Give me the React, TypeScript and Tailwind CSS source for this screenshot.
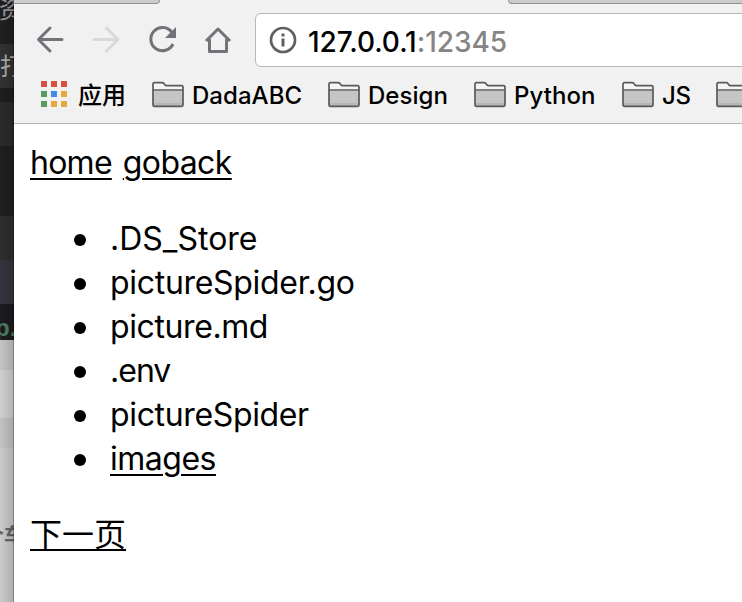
import React from "react";

const uiFont = "font-['Inter','Noto_Sans_CJK_SC',sans-serif]";
const pageFont = "font-['Inter','Noto_Sans_CJK_SC',sans-serif]";

function Backdrop() {
  return (
    <aside className="relative flex w-[14px] shrink-0 flex-col overflow-hidden font-['Noto_Sans_CJK_SC',sans-serif]">
      <div className="h-[44px] shrink-0 bg-[#202022]">
        <span className="-ml-[1px] block -translate-y-[9px] whitespace-nowrap text-[24px] leading-[34px] text-[#999]">资</span>
      </div>
      <div className="h-[44px] shrink-0 bg-[#323232]">
        <span className="block whitespace-nowrap text-[24px] leading-[41px] text-[#aaa]">打</span>
      </div>
      <div className="h-[14px] shrink-0 bg-[#1e1e20]" />
      <div className="h-[44px] shrink-0 bg-[#2b2b2b]" />
      <div className="h-[70px] shrink-0 bg-[#1f1f21]" />
      <div className="h-[44px] shrink-0 bg-[#2e2e2e]" />
      <div className="h-[44px] shrink-0 bg-[#35343c]" />
      <div className="h-[36px] shrink-0 bg-[#1c1c20]">
        <span className="-ml-[5px] block whitespace-nowrap font-['Liberation_Sans',sans-serif] text-[24px] font-bold leading-[48px] text-[#4b8062]">p.</span>
      </div>
      <div className="h-[30px] shrink-0 bg-[#c5c5c5]" />
      <div className="h-[48px] shrink-0 bg-[#d0d0d0]" />
      <div className="h-[30px] shrink-0 bg-[#c3c3c3]" />
      <div className="h-[154px] shrink-0 bg-[#cbcbcb] pt-[72px]">
        <span className="-ml-[16px] flex text-[20px] font-bold leading-[30px] text-[#666]">
          <span className="shrink-0">个</span>
          <span className="shrink-0">车</span>
        </span>
      </div>
      <div className="absolute inset-y-0 right-0 w-[14px] bg-gradient-to-r from-black/0 to-black/15" />
      <div className="absolute inset-y-0 right-0 w-px bg-black/25" />
    </aside>
  );
}

function Folder() {
  return (
    <svg className="shrink-0" width="34" height="28" viewBox="0 0 34 28" fill="none">
      <path d="M2 10h30v14a1.3 1.3 0 0 1-1.3 1.3H3.3A1.3 1.3 0 0 1 2 24z" fill="#c5c5c5" />
      <path d="M2 22h30v3H2z" fill="#b6b6b6" />
      <path d="M2 9V3a1.3 1.3 0 0 1 1.3-1.3h8.4L15 4.6h15.7A1.3 1.3 0 0 1 32 6v3" fill="#f5f5f5" />
      <path d="M2 3a1.3 1.3 0 0 1 1.3-1.3h8.2c.5 0 .8.2 1.1.5l1.4 1.7c.4.5.8.7 1.3.7h15.4A1.3 1.3 0 0 1 32 6v18a1.3 1.3 0 0 1-1.3 1.3H3.3A1.3 1.3 0 0 1 2 24zM2 9h30" stroke="#5a5a5a" strokeWidth="1.7" />
    </svg>
  );
}

function AppsIcon() {
  const colors = ["#d55042", "#d55042", "#d55042", "#579b60", "#4689e8", "#e3a83e", "#579b60", "#e3a83e", "#e3a83e"];
  return (
    <svg className="mb-[2px] shrink-0" width="26" height="26" viewBox="0 0 26 26">
      {colors.map((c, i) => (
        <rect key={i} x={(i % 3) * 10} y={Math.floor(i / 3) * 10} width="6" height="6" fill={c} />
      ))}
    </svg>
  );
}

function NavIcons() {
  return (
    <svg className="shrink-0" width="241" height="54" viewBox="14 13 241 54" fill="none" stroke="#717378" strokeWidth="3">
      <path d="M62 39.5H39M50 28 38.5 39.5 50 51" strokeLinecap="round" strokeLinejoin="round" />
      <path d="M94 39.5h23M106.500 28 118 39.500 106.500 51" stroke="#d9d9d9" strokeLinecap="round" strokeLinejoin="round" />
      <path d="M171.800 32.200A11.600 11.600 0 1 0 173 44" />
      <path d="M176 27v11h-11z" fill="#717378" stroke="none" />
      <path d="M206 41 218 29l12 12M209.500 39v12.500h17V39" strokeLinejoin="round" />
    </svg>
  );
}

function Bookmark({ label, className }: { label: string; className: string }) {
  return (
    <div className={`flex shrink-0 items-center gap-[7px] ${className}`}>
      <Folder />
      <span className="mt-[2px] whitespace-nowrap">{label}</span>
    </div>
  );
}

function Chrome() {
  return (
    <header className={`flex h-[124px] shrink-0 flex-col border-b border-[#b5b5b5] bg-[#f1f1f1] ${uiFont}`}>
      <div className="flex h-[4px] shrink-0 justify-between">
        <div className="w-[146px] rounded-br-[4px] border-b border-r border-[#929292] bg-[#cbcace]" />
        <div className="w-[234px] rounded-bl-[4px] border-b border-l border-[#929292] bg-[#cbcace]" />
      </div>
      <div className="mt-[9px] flex h-[54px] shrink-0">
        <NavIcons />
        <div className="-mr-[10px] flex flex-1 items-center rounded-[6px] border border-[#b8b8b8] bg-white pl-[13px]">
          <svg className="shrink-0" width="28" height="28" viewBox="0 0 28 28" fill="none">
            <circle cx="14" cy="14" r="12" stroke="#5f6065" strokeWidth="2.700" />
            <path d="M12.500 7.500h3v3h-3zM12.500 12.500h3v8h-3z" fill="#5f6065" />
          </svg>
          <span className="ml-[11px] mt-[3px] whitespace-nowrap text-[28px] font-[450] leading-[40px] tracking-[-0.050px] text-black">
            127.0.0.1<span className="text-[#858585]">:12345</span>
          </span>
        </div>
      </div>
      <div className="flex h-[56px] items-center overflow-hidden pl-[27px] text-[24px] font-[450] leading-[32px] text-black">
        <AppsIcon />
        <span className="ml-[11px] mt-[2px] w-[48px] shrink-0 whitespace-nowrap">应用</span>
        <Bookmark label="DadaABC" className="ml-[25px] w-[176px] tracking-[0.050px]" />
        <Bookmark label="Design" className="w-[146px] tracking-[0.050px]" />
        <Bookmark label="Python" className="w-[148px] tracking-[0.050px]" />
        <Bookmark label="JS" className="w-[94px] tracking-[-0.300px]" />
        <Folder />
      </div>
    </header>
  );
}

const link = "underline decoration-[2px] underline-offset-[4px]";

function Directory() {
  const files = [
    { name: ".DS_Store", spacing: "tracking-[0px]" },
    { name: "pictureSpider.go", spacing: "tracking-[-0.300px]" },
    { name: "picture.md", spacing: "tracking-[-0.400px]" },
    { name: ".env", spacing: "tracking-[-1px]" },
    { name: "pictureSpider", spacing: "tracking-[-0.350px]" },
    { name: "images", spacing: "tracking-[-0.500px]", href: true },
  ];
  return (
    <main className={`flex flex-1 flex-col bg-white pl-[16px] pt-[17px] text-[32px] leading-[44px] text-black ${pageFont}`}>
      <nav className="flex gap-[11px]">
        <a className={`${link} tracking-[-0.750px]`}>home</a>
        <a className={`${link} tracking-[-0.600px]`}>goback</a>
      </nav>
      <ul className="mt-[32px] flex flex-col">
        {files.map((f) => (
          <li key={f.name} className="flex h-[44px] items-center pl-[44px]">
            <span className="mt-[1px] h-[12px] w-[12px] rounded-full bg-black" />
            <span className={`ml-[24px] whitespace-nowrap ${f.spacing} ${f.href ? link : ""}`}>{f.name}</span>
          </li>
        ))}
      </ul>
      <a className="mt-[32px] w-fit font-['Liberation_Sans','Noto_Sans_CJK_SC',sans-serif] text-[32px] underline decoration-[2px] underline-offset-[3px]">下一页</a>
    </main>
  );
}

export default function App() {
  return (
    <div className="flex h-[602px] w-[742px] overflow-hidden bg-white">
      <Backdrop />
      <div className="flex min-w-0 flex-1 flex-col overflow-hidden">
        <Chrome />
        <Directory />
      </div>
    </div>
  );
}
